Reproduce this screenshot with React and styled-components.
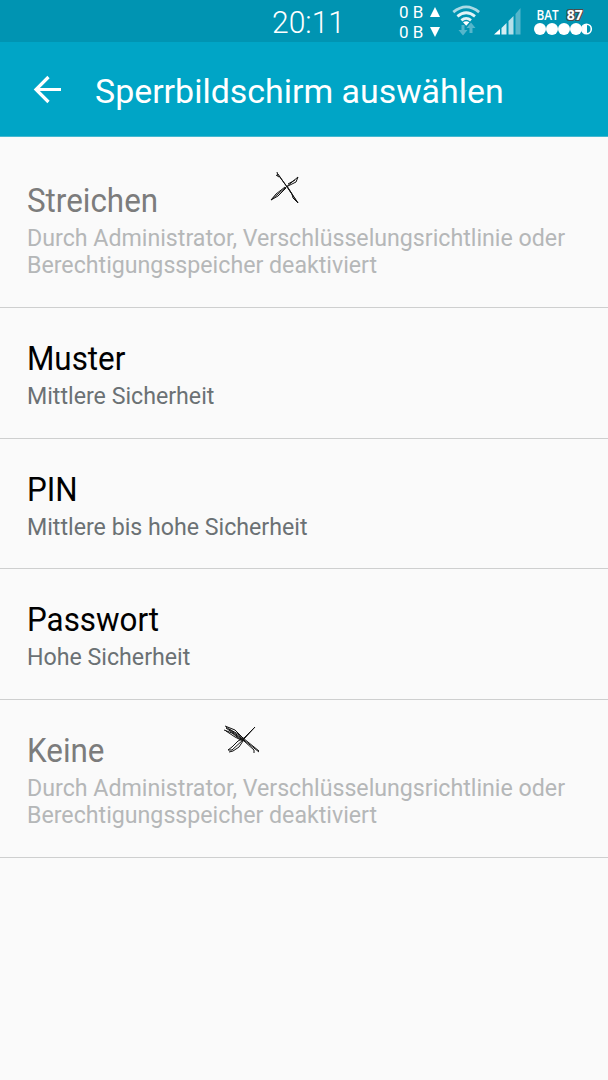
import styled, { createGlobalStyle } from "styled-components";

const GlobalStyle = createGlobalStyle`
  * {
    box-sizing: border-box;
  }
  body {
    margin: 0;
    background-color: #fafafa;
    font-family: Roboto, sans-serif;
  }
`;

const Screen = styled.div`
  width: 608px;
  height: 1080px;
  overflow: hidden;
  background-color: #fafafa;
`;

const StatusBar = styled.div`
  height: 42px;
  display: flex;
  align-items: flex-start;
  background-color: #0094b2;
  color: white;
`;
const Clock = styled.div`
  width: 126px;
  margin-left: 272px;
  font-size: 31px;
  font-weight: 300;
  line-height: 46px;
  transform: scaleX(0.97);
  transform-origin: left;
`;
const Traffic = styled.div`
  width: 54px;
  padding: 2px 0 0 1px;
`;
const TrafficRow = styled.div`
  display: flex;
  align-items: center;
  height: 20px;
  font-size: 17px;
  line-height: 20px;
`;
const TrafficValue = styled.span`
  width: 31px;
  white-space: nowrap;
`;
const Battery = styled.div`
  margin-left: 10px;
  padding-top: 7px;
`;
const BatteryLabel = styled.div`
  display: flex;
  gap: 10px;
  padding-left: 3px;
  height: 15px;
  font-family: "Open Sans", sans-serif;
  font-size: 14px;
  line-height: 15px;
  font-weight: 600;
  transform: scaleX(0.84);
  transform-origin: left;
`;
const BatteryLevel = styled.span`
  font-weight: 700;
  font-size: 14px;
  transform: scaleX(1.2);
  transform-origin: left;
  text-shadow: -1px -1px 0 #4b4b4b, 1px -1px 0 #4b4b4b, -1px 1px 0 #4b4b4b,
    1px 1px 0 #4b4b4b;
`;

const Header = styled.header`
  height: 95px;
  display: flex;
  align-items: center;
  padding: 2px 0 0 32px;
  background-color: #00a5c6;
  border-bottom: 1px solid #45b8d0;
  color: white;
`;
const Title = styled.h1`
  margin: 1px 0 0 32px;
  font-size: 34px;
  font-weight: 400;
  line-height: 40px;
  white-space: nowrap;
  transform: scaleX(0.997);
  transform-origin: left;
`;

const List = styled.div`
  padding-top: 13px;
`;
const Item = styled.div`
  position: relative;
  height: ${(props) => props.$height}px;
  padding: 30.5px 27px 0;
  border-bottom: 1px solid #cecfcf;
`;
const Name = styled.div`
  height: 43px;
  font-size: 33px;
  line-height: 40px;
  color: ${(props) => (props.$disabled ? "#7c7c7c" : "#000")};
  transform: scaleX(0.95);
  transform-origin: left;
`;
const Summary = styled.div`
  font-size: 24.5px;
  line-height: 27.5px;
  white-space: pre;
  color: ${(props) => (props.$disabled ? "#b5b7b8" : "#6b7174")};
  transform: scaleX(0.946);
  transform-origin: left;
`;
const Scribble = styled.svg`
  position: absolute;
  left: ${(props) => props.$left}px;
  top: ${(props) => props.$top}px;
  fill: none;
  stroke: #111;
  stroke-width: 1;
`;

const ArrowIcon = () => (
  <svg width="31" height="30" viewBox="0 0 31 30" fill="none" stroke="#fff" strokeWidth="3.2">
    <path d="M16.5 2 4 14.500l12.500 12.500M4 14.500h25" />
  </svg>
);

const WifiIcon = () => (
  <svg width="30" height="42" viewBox="0 0 30 42" fill="none" stroke="#e2f3f7" strokeWidth="2.8">
    <path d="M1.3 12.1Q14.2 1.7 27.1 12.1" stroke="#a9dae5" />
    <path d="M5.4 16.4Q14.2 9.2 23 16.4" />
    <path d="M9.4 20.4Q14.2 16.4 19 20.4" />
    <path d="m11 22.3 3.2 3.4 3.2-3.4q-3.2-2-6.4 0Z" fill="#fff" stroke="none" />
    <path d="M9.5 25h3v5h3l-4.5 5.5-4.5-5.5h3ZM17.5 33h3v-5h3l-4.5-5.5-4.5 5.5h3Z" fill="#55b6cb" stroke="none" />
  </svg>
);

const SignalIcon = () => (
  <svg width="42" height="42" viewBox="0 0 42 42">
    <path d="M12 34.5 18 29v5.5Z" fill="#fff" />
    <path d="M19.5 28l5-5v11.5h-5Z" fill="#d5eef3" />
    <path d="M26.5 21l5-5v18.5h-5Z" fill="#b5dfe9" />
    <path d="M33.5 14l5-6v26.5h-5Z" fill="#55b6cb" />
  </svg>
);

const BatteryDots = () => (
  <svg width="60" height="14" viewBox="0 0 60 14">
    {[6, 18, 30, 42].map((x) => (
      <circle key={x} cx={x} cy="6" r="6" fill="#fff" />
    ))}
    <circle cx="52.5" cy="6" r="4.8" fill="none" stroke="#fff" strokeWidth="1.6" />
    <path d="M53 1a5 5 0 0 0 0 10Z" fill="#fff" />
  </svg>
);

const items = [
  {
    name: "Streichen",
    summary: "Durch Administrator, Verschlüsselungsrichtlinie oder\nBerechtigungsspeicher deaktiviert",
    height: 158,
    disabled: true,
    scribble: {
      left: 268,
      top: 20,
      d: "M9 2l1 4M8 5l3 2M10 4l9 13 11 16M11 6l9 12 10 15-5-5-1-4-5-8M30 7 17 18 3 30l7-4 8-8M30 7l-2 5-8 4M27 10l-7 4M3 30l5-6 9-7",
    },
  },
  { name: "Muster", summary: "Mittlere Sicherheit", height: 131 },
  { name: "PIN", summary: "Mittlere bis hohe Sicherheit", height: 130 },
  { name: "Passwort", summary: "Hohe Sicherheit", height: 131 },
  {
    name: "Keine",
    summary: "Durch Administrator, Verschlüsselungsrichtlinie oder\nBerechtigungsspeicher deaktiviert",
    height: 158,
    disabled: true,
    scribble: {
      left: 222,
      top: 22,
      d: "M3 4l10 4 8 8 16 13M2 8l8 3 9 7M4 5l14 10 19 15M4 9l9 6 8 4M4 6l18 13 10 9v3M33 5 22 17 10 28H6l4-3 6-6 6-3L33 5M21 19l-4 6-6 4-4 1M7 7l9 5 6 7",
    },
  },
];

const App = () => {
  return (
    <Screen>
      <GlobalStyle />
      <StatusBar>
        <Clock>20:11</Clock>
        <Traffic>
          <TrafficRow>
            <TrafficValue>0 B</TrafficValue>
            <svg width="10" height="10">
              <path d="M5 0l5 10H0Z" fill="#fff" />
            </svg>
          </TrafficRow>
          <TrafficRow>
            <TrafficValue>0 B</TrafficValue>
            <svg width="10" height="10">
              <path d="M0 0h10L5 10Z" fill="#fff" />
            </svg>
          </TrafficRow>
        </Traffic>
        <WifiIcon />
        <SignalIcon />
        <Battery>
          <BatteryLabel>
            BAT <BatteryLevel>87</BatteryLevel>
          </BatteryLabel>
          <BatteryDots />
        </Battery>
      </StatusBar>
      <Header>
        <ArrowIcon />
        <Title>Sperrbildschirm auswählen</Title>
      </Header>
      <List>
        {items.map((item) => (
          <Item key={item.name} $height={item.height}>
            <Name $disabled={item.disabled}>{item.name}</Name>
            <Summary $disabled={item.disabled}>{item.summary}</Summary>
            {item.scribble && (
              <Scribble
                $left={item.scribble.left}
                $top={item.scribble.top}
                width="40"
                height="36"
              >
                <path d={item.scribble.d} />
              </Scribble>
            )}
          </Item>
        ))}
      </List>
    </Screen>
  );
};

export default App;
